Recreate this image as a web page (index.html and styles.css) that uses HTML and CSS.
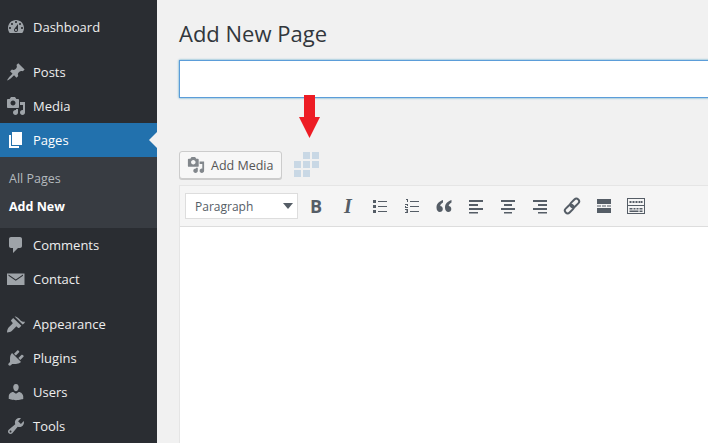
FILE: index.html
```html
<!DOCTYPE html>
<html lang="en">
<head>
<meta charset="utf-8">
<title>Add New Page</title>
<link rel="stylesheet" href="styles.css">
</head>
<body>
<div class="layout">
  <nav class="sidebar">
    <a class="item group-start"><svg class="ico" viewBox="0 0 20 20"><path d="M3.76 16h12.48c1.1-1.37 1.76-3.11 1.76-5 0-4.42-3.58-8-8-8s-8 3.58-8 8c0 1.89.66 3.63 1.76 5zM10 4c.55 0 1 .45 1 1s-.45 1-1 1-1-.45-1-1 .45-1 1-1zM6 6c.55 0 1 .45 1 1s-.45 1-1 1-1-.45-1-1 .45-1 1-1zm8 0c.55 0 1 .45 1 1s-.45 1-1 1-1-.45-1-1 .45-1 1-1zm-5.37 5.55L12 7v6c0 1.1-.9 2-2 2s-2-.9-2-2c0-.57.24-1.08.63-1.45zM4 10c.55 0 1 .45 1 1s-.45 1-1 1-1-.45-1-1 .45-1 1-1zm12 0c.55 0 1 .45 1 1s-.45 1-1 1-1-.45-1-1 .45-1 1-1zm-5 3c0-.55-.45-1-1-1s-1 .45-1 1 .45 1 1 1 1-.45 1-1z"/></svg><span>Dashboard</span></a>
    <a class="item group-start"><svg class="ico" viewBox="0 0 20 20"><path d="M10.44 3.02l1.82-1.82 6.36 6.35-1.83 1.82c-1.05-.68-2.48-.57-3.41.36l-.75.75c-.92.93-1.04 2.35-.35 3.41l-1.83 1.82-2.41-2.41-2.8 2.79c-.42.42-3.38 2.71-3.8 2.29s1.86-3.39 2.28-3.81l2.79-2.79L4.1 9.36l1.83-1.82c1.05.69 2.48.57 3.4-.36l.75-.75c.93-.92 1.05-2.35.36-3.41z"/></svg><span>Posts</span></a>
    <a class="item"><svg class="ico" viewBox="0 0 20 20"><path d="M13 11V4c0-.55-.45-1-1-1h-1.67L9 1H5L3.67 3H2c-.55 0-1 .45-1 1v7c0 .55.45 1 1 1h10c.55 0 1-.45 1-1zM7 4.5c1.38 0 2.5 1.12 2.5 2.5S8.38 9.5 7 9.5 4.5 8.38 4.5 7 5.62 4.5 7 4.5zM14 6h5v10.5c0 1.38-1.12 2.5-2.5 2.5S14 17.88 14 16.5s1.12-2.5 2.5-2.5c.17 0 .34.02.5.05V9h-3V6zm-4 8.05V13h2v3.5c0 1.38-1.12 2.5-2.5 2.5S7 17.88 7 16.5 8.12 14 9.5 14c.17 0 .34.02.5.05z"/></svg><span>Media</span></a>
    <a class="item active"><svg class="ico" viewBox="0 0 20 20"><path d="M6 15V2h10v13H6zm-1 1h8v2H3V5h2v11z"/></svg><span>Pages</span></a>
    <div class="submenu">
      <a class="sub">All Pages</a>
      <a class="sub current">Add New</a>
    </div>
    <a class="item"><svg class="ico" viewBox="0 0 20 20"><path d="M5 2h9c1.1 0 2 .9 2 2v7c0 1.1-.9 2-2 2h-2l-5 5v-5H5c-1.1 0-2-.9-2-2V4c0-1.1.9-2 2-2z"/></svg><span>Comments</span></a>
    <a class="item group-end"><svg class="ico" viewBox="0 0 20 20"><path fill-rule="evenodd" d="M1 4.500h17.500V16H1zM2.500 5.500l7.250 5 7.250-5v1.300l-7.250 5-7.250-5z"/></svg><span>Contact</span></a>
    <a class="item"><svg class="ico" viewBox="0 0 20 20"><path d="M8.6 2.6l8 8c1.2-.5 1.9-1.3 2.4-2.8-1.9.3-3.2-.4-4.4-1.4-1.5-1.2-2.7-3-4.4-3.6-.7-.2-1.1-.2-1.6-.2zM7.2 4L5.3 5.900c-.4.4-.4 1 0 1.400l1.100 1.100c.4.4.4 1 0 1.400l-3.800 3.600C1.700 14.300 1 16.500 1 18.500c2-.2 4-.9 5-1.800l3.700-3.800c.4-.4 1-.4 1.400 0l.9.9c.4.4 1 .4 1.400 0l2-2z"/></svg><span>Appearance</span></a>
    <a class="item"><svg class="ico" viewBox="0 0 20 20"><path d="M13.11 4.36L9.87 7.6 8 5.73l3.24-3.24c.35-.34 1.05-.2 1.56.32.52.51.66 1.21.31 1.55zm-8 1.77l.91-1.12 9.01 9.01-1.19.84c-.71.71-2.63 1.16-3.82 1.16H6.14L4.9 17.26c-.59.59-1.54.59-2.12 0-.59-.58-.59-1.53 0-2.12l1.24-1.24v-3.88c0-1.13.4-3.19 1.09-3.89zm7.26 3.97l3.24-3.24c.34-.35 1.04-.21 1.55.31.52.51.66 1.21.31 1.55l-3.24 3.25z"/></svg><span>Plugins</span></a>
    <a class="item"><svg class="ico" viewBox="0 0 20 20"><path d="M10 9.25c-2.27 0-2.73-3.44-2.73-3.44C7 4.02 7.82 2 9.97 2c2.16 0 2.98 2.02 2.71 3.81 0 0-.41 3.44-2.68 3.44zm0 2.57L12.72 10c2.39 0 4.52 2.33 4.52 4.53v2.49s-3.65 1.13-7.24 1.13c-3.65 0-7.24-1.13-7.24-1.13v-2.49c0-2.25 1.94-4.48 4.47-4.48z"/></svg><span>Users</span></a>
    <a class="item"><svg class="ico" viewBox="0 0 20 20"><path d="M16.68 9.77c-1.34 1.34-3.3 1.67-4.95.99l-5.41 6.52c-.99.99-2.59.99-3.58 0s-.99-2.59 0-3.57l6.52-5.42c-.68-1.65-.35-3.61.99-4.95 1.28-1.28 3.12-1.62 4.72-1.06l-2.89 2.89 2.82 2.82 2.86-2.87c.53 1.58.18 3.39-1.08 4.65zM3.81 16.21c.4.39 1.04.39 1.43 0 .4-.4.4-1.04 0-1.43-.39-.4-1.03-.4-1.43 0-.39.39-.39 1.03 0 1.43z"/></svg><span>Tools</span></a>
  </nav>

  <main class="main">
    <h1 class="title">Add New Page</h1>
    <div class="title-input"></div>
    <svg class="arrow" viewBox="0 0 21 43"><path d="M5 0h11v22h5L10.500 43 0 22h5z"/></svg>
    <div class="media-row">
      <button class="media-btn" type="button"><svg class="btn-ico" viewBox="0 0 20 20"><path d="M13 11V4c0-.55-.45-1-1-1h-1.67L9 1H5L3.67 3H2c-.55 0-1 .45-1 1v7c0 .55.45 1 1 1h10c.55 0 1-.45 1-1zM7 4.500c1.380 0 2.500 1.120 2.500 2.500S8.380 9.500 7 9.500 4.500 8.380 4.500 7 5.620 4.500 7 4.500zM14 6h5v10.500c0 1.380-1.120 2.500-2.500 2.500S14 17.880 14 16.500s1.120-2.500 2.500-2.500c.17 0 .34.02.5.05V9h-3V6zm-4 8.050V13h2v3.500c0 1.380-1.120 2.500-2.500 2.500S7 17.880 7 16.500 8.120 14 9.500 14c.17 0 .34.02.5.05z"/></svg><span>Add Media</span></button>
      <svg class="grid-ico" viewBox="0 0 26 26"><path d="M9 0h7v7H9zM18 0h7v7h-7zM9 9h7v7H9zM18 9h7v7h-7zM0 9h7v7H0zM0 18h7v7H0zM9 18h7v7H9z"/></svg>
    </div>
    <section class="editor">
      <div class="toolbar">
        <div class="select"><span>Paragraph</span><i class="caret"></i></div>
        <div class="tools">
          <span class="tool glyph-b">B</span>
          <span class="tool glyph-i">I</span>
          <span class="tool"><svg class="t" viewBox="0 0 16 16"><path d="M1 2h3v3H1zM1 7h3v3H1zM1 12h3v3H1zM6 3h9v1H6zM6 8h9v1H6zM6 13h9v1H6z"/></svg></span>
          <span class="tool"><svg class="t" viewBox="0 0 16 16"><path d="M2 1h2v3H3V2H2zM1 6h3v2H2v1h2v1H1V8h2V7H1zM1 11h3v4H1v-1h2v-.5H2v-1h1V12H1zM6 3h9v1H6zM6 8h9v1H6zM6 13h9v1H6z"/></svg></span>
          <span class="tool"><svg class="t" viewBox="0 0 16 16"><path d="M7 2C3.200 3.300.500 5.600.500 9.500.500 12.300 2 14 3.800 14 5.500 14 6.800 12.700 6.800 11S5.600 8 4.200 8c.3-1.500 1.300-2.600 2.800-3.400zM15.500 2C11.700 3.300 9 5.600 9 9.500 9 12.300 10.500 14 12.300 14c1.700 0 3-1.300 3-3S14.100 8 12.700 8c.3-1.500 1.300-2.600 2.800-3.400z"/></svg></span>
          <span class="tool"><svg class="t" viewBox="0 0 16 16"><path d="M1 2h14v2H1zM1 6h9v2H1zM1 10h14v2H1zM1 14h9v1.500H1z"/></svg></span>
          <span class="tool"><svg class="t" viewBox="0 0 16 16"><path d="M1 2h14v2H1zM4 6h8v2H4zM1 10h14v2H1zM4 14h8v1.500H4z"/></svg></span>
          <span class="tool"><svg class="t" viewBox="0 0 16 16"><path d="M1 2h14v2H1zM6 6h9v2H6zM1 10h14v2H1zM6 14h9v1.500H6z"/></svg></span>
          <span class="tool"><svg class="t t-link" viewBox="0 0 18 18"><g class="link-strokes"><rect x="9" y="1" width="5.500" height="10" rx="2.750" transform="rotate(45 11.750 6)"/><rect x="3.500" y="7" width="5.500" height="10" rx="2.750" transform="rotate(45 6.250 12)"/></g></svg></span>
          <span class="tool"><svg class="t t-more" viewBox="0 0 16 16"><path d="M1 1h14v5H1zM1 7.500h4v1H1zM6 7.500h4v1H6zM11 7.500h4v1h-4zM1 10h14v5H1z"/></svg></span>
          <span class="tool"><svg class="t t-kb" viewBox="0 0 18 16"><path fill-rule="evenodd" d="M0 0h18v16H0zM1 1v6h16V1zM1 8v7h16V8z"/><path d="M2.500 3h2v2h-2zM5.500 3h2v2h-2zM8.500 3h2v2h-2zM11.500 3h2v2h-2zM14 3h1.500v2H14zM2.500 10h3v1.500h-3zM6.500 10h2v1.500h-2zM9.500 10h2v1.500h-2zM12.500 10h3v1.500h-3zM2.500 12.500h9V14h-9zM12.500 12.500h3V14h-3z"/></svg></span>
        </div>
      </div>
      <div class="content"></div>
    </section>
  </main>
</div>
</body>
</html>
```

FILE: styles.css
```css
* { box-sizing: border-box; }
html, body { margin: 0; height: 100%; overflow: hidden; }
body {
  background: #f1f1f1;
  font-family: "Open Sans", "Liberation Sans", sans-serif;
  color: #32373c;
}
.layout { display: flex; height: 443px; overflow: hidden; }

.sidebar {
  width: 157px;
  flex: none;
  background: #2a2d32;
  padding-top: 10px;
  overflow: hidden;
}
.item {
  position: relative;
  display: flex;
  align-items: center;
  height: 34px;
  padding-left: 6px;
  color: #eeeeee;
  font-size: 13px;
}
.item span { margin-left: 7px; }
.group-start:first-child { margin-bottom: 11px; }
.group-end { margin-bottom: 11px; }
.ico { width: 20px; height: 20px; fill: #9ea3a8; flex: none; }
.active { background: #2271ad; color: #fff; }
.active .ico { fill: #fff; }
.active::after {
  content: "";
  position: absolute;
  right: 0;
  top: 9px;
  border: 8px solid transparent;
  border-right-color: #f1f1f1;
  border-left-width: 0;
}
.submenu {
  background: #383c42;
  height: 71px;
  padding-top: 7px;
}
.sub {
  display: flex;
  align-items: center;
  height: 28px;
  padding-left: 9px;
  font-size: 12.500px;
  color: #b4b9be;
}
.current { color: #fff; font-weight: 700; }

.main {
  position: relative;
  flex: 1;
  min-width: 0;
  padding-left: 22px;
  overflow: hidden;
}
.title {
  margin: 0;
  padding-top: 18px;
  height: 60px;
  font-size: 22px;
  line-height: 30px;
  font-weight: 400;
  color: #32373c;
}
.title-input {
  width: 560px;
  height: 38px;
  background: #fff;
  border: 1px solid #5b9dd9;
  box-shadow: 0 0 2px rgba(30, 140, 190, .8);
}
.arrow {
  position: absolute;
  left: 142px;
  top: 95px;
  width: 21px;
  height: 43px;
  fill: #ed1c24;
}
.media-row {
  display: flex;
  align-items: flex-start;
  margin-top: 53px;
  height: 34px;
}
.media-btn {
  display: flex;
  align-items: center;
  width: 103px;
  height: 28px;
  padding: 0 0 0 7px;
  background: #f7f7f7;
  border: 1px solid #cccccc;
  border-radius: 3px;
  box-shadow: 0 1px 0 #cccccc;
  color: #555555;
  font: 12.500px "Open Sans", "Liberation Sans", sans-serif;
}
.btn-ico { width: 18px; height: 18px; fill: #82878c; margin-right: 6px; flex: none; }
.grid-ico { width: 26px; height: 26px; margin: 1px 0 0 12px; fill: #c9d8e5; }
.editor {
  width: 560px;
  border: 1px solid #e5e5e5;
  border-bottom: 0;
  height: 258px;
  background: #fff;
}
.toolbar {
  display: flex;
  align-items: center;
  height: 41px;
  padding-left: 5px;
  background: #f5f5f5;
  border-bottom: 1px solid #dddddd;
}
.select {
  display: flex;
  align-items: center;
  justify-content: space-between;
  width: 113px;
  height: 26px;
  padding: 0 2px 0 9px;
  background: #fff;
  border: 1px solid #dddddd;
  font-size: 12px;
  color: #555d66;
}
.caret {
  border: 5px solid transparent;
  border-top: 6px solid #555d66;
  border-bottom: 0;
  margin-right: 2px;
}
.tools { display: flex; margin-left: 2px; }
.tool {
  display: flex;
  align-items: center;
  justify-content: center;
  width: 32px;
  height: 26px;
  color: #555d66;
}
.glyph-b { font: 700 18px "Open Sans", "Liberation Sans", sans-serif; }
.glyph-i { font: italic 700 20px "Liberation Serif", serif; }
.t { width: 16px; height: 16px; fill: #555d66; }
.t-link { width: 18px; height: 18px; }
.link-strokes { fill: none; stroke: #555d66; stroke-width: 2; }
.t-kb { width: 18px; height: 16px; }
```
